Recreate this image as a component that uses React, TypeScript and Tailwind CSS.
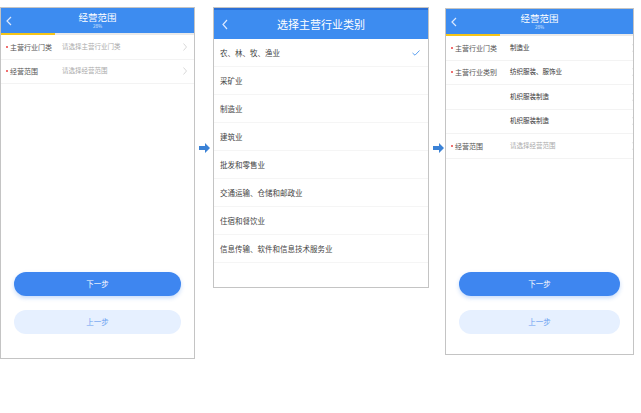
import React from "react";

const font = { fontFamily: '"Noto Sans CJK SC", "Noto Sans", sans-serif' };

function Back() {
  return (
    <svg width="6" height="10" viewBox="0 0 6 10" className="shrink-0">
      <path d="M5 1 L1 5 L5 9" fill="none" stroke="#dbe8ff" strokeWidth="1.2" />
    </svg>
  );
}

function Chevron({ clip = false }: { clip?: boolean }) {
  return (
    <svg width="4" height="8" viewBox="0 0 4 8" className={clip ? "mr-[-10px]" : ""}>
      <path d="M0.5 0.5 L3.5 4 L0.5 7.5" fill="none" stroke="#cfcfcf" strokeWidth="0.8" />
    </svg>
  );
}

function Arrow() {
  return (
    <svg width="11" height="10" viewBox="0 0 11 10">
      <path d="M0 3 H6 V0 L11 5 L6 10 V7 H0 Z" fill="#3b82d6" />
    </svg>
  );
}

function Header({ title }: { title: string }) {
  return (
    <div className="relative">
      <div className="h-[25px] bg-[#3d8cf0] flex items-center px-[5px] relative">
        <Back />
        <div className="absolute inset-0 flex flex-col items-center justify-center">
          <div className="text-[9.5px] leading-[11px] text-white">{title}</div>
          <div className="text-[4.5px] leading-[6px] text-[#dbe8ff]">28%</div>
        </div>
      </div>
      <div className="h-[2px] bg-[#eaeaea]">
        <div className="h-[2px] w-[54px] bg-[#f5c518]" />
      </div>
    </div>
  );
}

function Row({
  label,
  value,
  placeholder,
  star = true,
  clip = false,
  labelW = "w-[56px]",
}: {
  label?: string;
  value: string;
  placeholder?: boolean;
  star?: boolean;
  clip?: boolean;
  labelW?: string;
}) {
  return (
    <div className="h-[24.5px] flex items-center border-b border-[#f3f3f3] pl-[5px] pr-[7px]">
      <div className={`${labelW} flex items-center text-[7px] text-[#555]`}>
        {label ? (
          <>
            {star && <span className="w-[2px] h-[2px] bg-[#f07070] mr-[2px]" />}
            <span>{label}</span>
          </>
        ) : null}
      </div>
      <div className={`flex-1 text-[6.5px] ${placeholder ? "text-[#aaa]" : "text-[#333]"}`}>{value}</div>
      <Chevron clip={clip} />
    </div>
  );
}

function Buttons() {
  return (
    <div className="flex flex-col gap-[14px] px-[13px]">
      <div className="h-[24px] rounded-full bg-[#3e86f0] shadow-[0_2px_4px_rgba(62,134,240,0.3)] flex items-center justify-center text-[7.5px] text-white">
        下一步
      </div>
      <div className="h-[24px] rounded-full bg-[#e6f0ff] flex items-center justify-center text-[7.5px] text-[#6a9ef0]">
        上一步
      </div>
    </div>
  );
}

const list = [
  "农、林、牧、渔业",
  "采矿业",
  "制造业",
  "建筑业",
  "批发和零售业",
  "交通运输、仓储和邮政业",
  "住宿和餐饮业",
  "信息传输、软件和信息技术服务业",
];

export default function App() {
  return (
    <div style={font} className="w-[641px] h-[413px] bg-white flex items-start pt-[7px]">
      {/* Panel 1 */}
      <div className="w-[195px] h-[352px] border border-[#c4c4c4] flex flex-col bg-white">
        <Header title="经营范围" />
        <Row label="主营行业门类" value="请选择主营行业门类" placeholder />
        <Row label="经营范围" value="请选择经营范围" placeholder />
        <div className="flex-1" />
        <Buttons />
        <div className="h-[24px]" />
      </div>

      <div className="w-[18px] flex justify-center pt-[136px] pl-[1px]">
        <Arrow />
      </div>

      {/* Panel 2 */}
      <div className="w-[216px] h-[281px] border border-[#c4c4c4] flex flex-col bg-white">
        <div className="h-[2px] bg-[#2a6fd6]" />
        <div className="h-[29px] bg-[#3d8cf0] flex items-center px-[8px] relative">
          <svg width="6" height="11" viewBox="0 0 6 11">
            <path d="M5 1 L1 5.5 L5 10" fill="none" stroke="#dbe8ff" strokeWidth="1.2" />
          </svg>
          <div className="absolute inset-0 flex items-center justify-center text-[11px] text-white">
            选择主营行业类别
          </div>
        </div>
        {list.map((t, i) => (
          <div
            key={t}
            className="h-[28px] flex items-center justify-between border-b border-[#f5f5f5] pl-[6px] pr-[8px] text-[7.5px] text-[#444]"
          >
            <span>{t}</span>
            {i === 0 && (
              <svg width="8" height="6" viewBox="0 0 8 6">
                <path d="M0.5 3 L3 5.2 L7.5 0.5" fill="none" stroke="#5fa2f0" strokeWidth="1" />
              </svg>
            )}
          </div>
        ))}
      </div>

      <div className="w-[16px] flex justify-center pt-[136px] pl-[2px]">
        <Arrow />
      </div>

      {/* Panel 3 */}
      <div className="w-[189px] h-[347px] border border-[#c4c4c4] flex flex-col bg-white mt-[1px] overflow-hidden">
        <Header title="经营范围" />
        <Row label="主营行业门类" value="制造业" labelW="w-[59px]" clip />
        <Row label="主营行业类别" value="纺织服装、服饰业" labelW="w-[59px]" clip />
        <Row value="机织服装制造" labelW="w-[59px]" clip />
        <Row value="机织服装制造" labelW="w-[59px]" clip />
        <Row label="经营范围" value="请选择经营范围" placeholder labelW="w-[59px]" clip />
        <div className="flex-1" />
        <Buttons />
        <div className="h-[20px]" />
      </div>
    </div>
  );
}
